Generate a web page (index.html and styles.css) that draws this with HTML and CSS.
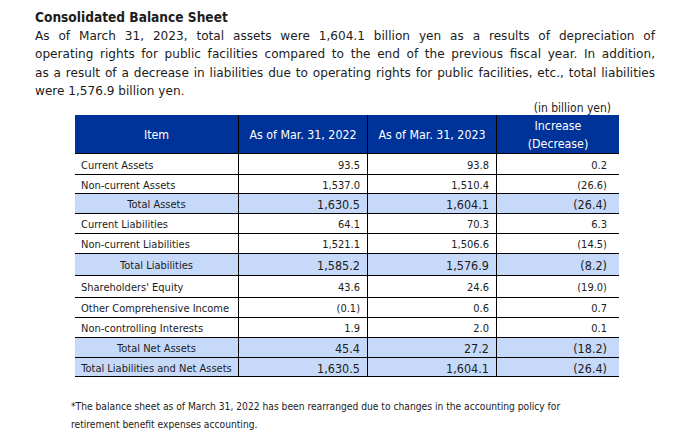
FILE: index.html
```html
<!DOCTYPE html>
<html>
<head>
<meta charset="utf-8">
<link rel="stylesheet" href="styles.css">
</head>
<body>
<div class="page">
  <h1 class="title">Consolidated Balance Sheet</h1>
  <p class="lead"><span class="ln">As of March 31, 2023, total assets were 1,604.1 billion yen as a results of depreciation of</span> <span class="ln">operating rights for public facilities compared to the end of the previous fiscal year. In addition,</span> <span class="ln">as a result of a decrease in liabilities due to operating rights for public facilities, etc., total liabilities</span> <span class="last">were 1,576.9 billion yen<span class="red">.</span></span></p>
  <div class="unit">(in billion yen)</div>
  <table class="bs">
    <thead>
      <tr>
        <th class="c1">Item</th>
        <th class="c2">As of Mar. 31, 2022</th>
        <th class="c3">As of Mar. 31, 2023</th>
        <th class="c4">Increase<br>(Decrease)</th>
      </tr>
    </thead>
    <tbody>
      <tr class="h21"><td class="lbl">Current Assets</td><td>93.5</td><td>93.8</td><td class="chg">0.2</td></tr>
      <tr class="h19"><td class="lbl">Non-current Assets</td><td>1,537.0</td><td>1,510.4</td><td class="chg">(26.6)</td></tr>
      <tr class="tot"><td class="lbl">Total Assets</td><td>1,630.5</td><td>1,604.1</td><td class="chg">(26.4)</td></tr>
      <tr><td class="lbl">Current Liabilities</td><td>64.1</td><td>70.3</td><td class="chg">6.3</td></tr>
      <tr><td class="lbl">Non-current Liabilities</td><td>1,521.1</td><td>1,506.6</td><td class="chg">(14.5)</td></tr>
      <tr class="tot h22"><td class="lbl">Total Liabilities</td><td>1,585.2</td><td>1,576.9</td><td class="chg">(8.2)</td></tr>
      <tr class="h22"><td class="lbl">Shareholders' Equity</td><td>43.6</td><td>24.6</td><td class="chg">(19.0)</td></tr>
      <tr><td class="lbl">Other Comprehensive Income</td><td>(0.1)</td><td>0.6</td><td class="chg">0.7</td></tr>
      <tr><td class="lbl">Non-controlling Interests</td><td>1.9</td><td>2.0</td><td class="chg">0.1</td></tr>
      <tr class="tot"><td class="lbl">Total Net Assets</td><td>45.4</td><td>27.2</td><td class="chg">(18.2)</td></tr>
      <tr class="tot h19"><td class="lbl">Total Liabilities and Net Assets</td><td>1,630.5</td><td>1,604.1</td><td class="chg">(26.4)</td></tr>
    </tbody>
  </table>
  <p class="note">*The balance sheet as of March 31, 2022 has been rearranged due to changes in the accounting policy for retirement benefit expenses accounting.</p>
</div>
</body>
</html>
```

FILE: styles.css
```css
html, body {
  margin: 0;
  padding: 0;
  background: #ffffff;
}
body {
  font-family: "DejaVu Sans Condensed", "DejaVu Sans", sans-serif;
  color: #1c1c1c;
}
.page {
  padding: 8px 0 0 35px;
  width: 620px;
}
.title {
  margin: 0;
  font-size: 13.6px;
  font-weight: bold;
  line-height: 18px;
}
.lead {
  margin: 1px 0 0 0;
  font-family: "DejaVu Sans", sans-serif;
  font-size: 12.1px;
  line-height: 18.3px;
}
.lead .ln {
  display: block;
  white-space: nowrap;
  text-align: justify;
  text-align-last: justify;
}
.lead .last {
  display: block;
}
.red { color: #e00000; }
.unit {
  width: 576px;
  text-align: right;
  font-size: 12px;
  line-height: 14px;
  margin-top: 1px;
}
.bs {
  margin-left: 40px;
  width: 541px;
  border-collapse: collapse;
  table-layout: fixed;
  font-size: 11px;
}
.bs th {
  background: #003399;
  color: #ffffff;
  font-weight: normal;
  font-size: 12.3px;
  line-height: 18px;
  height: 36px;
  padding: 2px 0 0 0;
  text-align: center;
  border-bottom: 1px solid #000;
  border-left: 1px solid #000;
}
.bs th.c1 { width: 163px; border-left: none; }
.bs th.c2 { width: 128px; }
.bs th.c3 { width: 128px; }
.bs th.c4 { width: 122px; }
.bs td {
  height: 16px;
  padding: 3px 7px 0 6px;
  text-align: right;
  border-bottom: 1px solid #000;
  border-left: 1px solid #000;
  line-height: 14px;
  vertical-align: middle;
  white-space: nowrap;
}
.bs td.lbl {
  text-align: left;
  border-left: none;
}
.bs td.chg { padding-right: 12px; }
.bs tr.h21 td { height: 17px; }
.bs tr.h19 td { height: 15px; }
.bs tr.h22 td { height: 18px; }
.bs tr.tot td {
  background: #c6d9f8;
  font-size: 12.5px;
}
.bs tr.tot td.lbl {
  text-align: center;
  font-size: 11px;
  padding: 3px 2px 0 2px;
}
.note {
  margin: 21px 0 0 36px;
  font-size: 10.2px;
  line-height: 18px;
  width: 500px;
}
```
